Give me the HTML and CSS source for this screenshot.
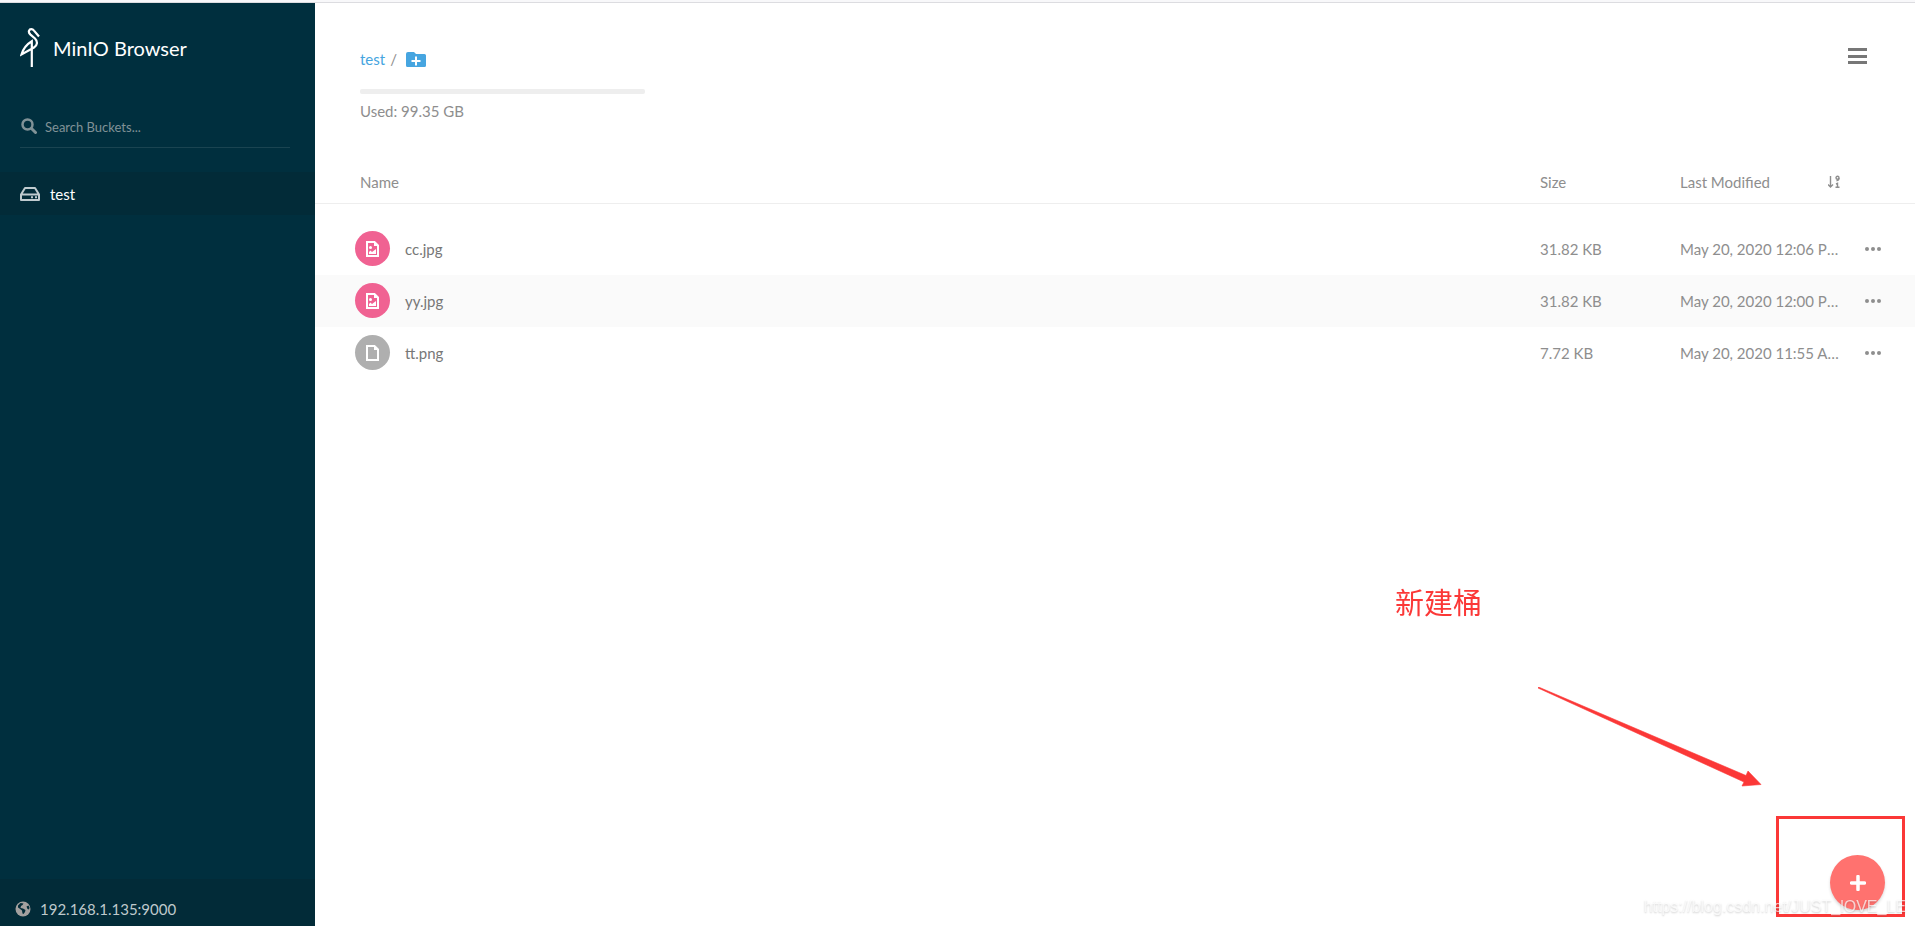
FILE: index.html
```
<!DOCTYPE html>
<html lang="en">
<head>
    <meta charset="UTF-8">
    <meta name="viewport" content="width=device-width, initial-scale=1.0">
    <title>MinIO Browser</title>
    <link rel="stylesheet" href="styles.css">
</head>
<body>
    <div class="page">
        <aside class="sidebar">
            <div class="brand">
                <svg class="logo" viewBox="0 0 20 40" width="20" height="40">
                    <path d="M19 8.500L14 2.600C12.500.700 9.800.700 9 2.800C8.500 4.300 9.200 5.400 10.500 6.600L15 10.500C18 13.500 17.400 17.500 14 19.500L1.500 26.500C3 21.500 6.500 16.500 11.800 13.300V39" fill="none" stroke="#fff" stroke-width="2.200"/>
                </svg>
                <h2>MinIO Browser</h2>
            </div>
            <label class="search">
                <svg viewBox="0 0 16 16" width="16" height="16">
                    <circle cx="6.500" cy="6.500" r="5" fill="none" stroke="currentColor" stroke-width="2.500"/>
                    <path d="M10.500 10.500l4 4" stroke="currentColor" stroke-width="3" stroke-linecap="round"/>
                </svg>
                <input type="text" placeholder="Search Buckets..." aria-label="Search Buckets">
            </label>
            <nav class="buckets">
                <a href="#" class="bucket">
                    <svg viewBox="0 0 20 14" width="20" height="14">
                        <path d="M1 7.500L5 1h10l4 6.500V13H1z M1 7.500h18" fill="none" stroke="currentColor" stroke-width="2" stroke-linejoin="round"/>
                        <path d="M11 10.300h2M15 10.300h2" stroke="currentColor" stroke-width="2"/>
                    </svg>
                    test
                </a>
            </nav>
            <footer class="host">
                <svg viewBox="0 0 16 16" width="16" height="16">
                    <circle cx="8" cy="8" r="7.500" fill="#a3a09f"/>
                    <path d="M3 4.500l2.500-2.500 3 .500-1 1.500L6 5l-.500 2 2.500.500 2.500 1.500-.500 2-1.500 2-1-.500-.500-3L4.500 7.500 3 6.500zM11.500 5.500l2-1 1 2-.500 2-1.500-.500z" fill="#022b38"/>
                </svg>
                <a href="#">192.168.1.135:9000</a>
            </footer>
        </aside>

        <main class="content">
            <header class="header">
                <div>
                    <div class="path">
                        <a href="#">test</a>
                        <span>/</span>
                        <button class="icon-btn" aria-label="New folder">
                            <svg viewBox="0 0 20 15" width="20" height="15">
                                <path d="M2 0h6l2 2h8.500A1.500 1.500 0 0 1 20 3.500v10a1.500 1.500 0 0 1-1.500 1.500h-17A1.500 1.500 0 0 1 0 13.500V2A2 2 0 0 1 2 0z" fill="#46a5e0"/>
                                <path d="M10 4.500v9M5.500 9h9" stroke="#fff" stroke-width="2"/>
                            </svg>
                        </button>
                    </div>
                    <div class="usage-bar"></div>
                    <div class="usage-text">Used: 99.35 GB</div>
                </div>
                <button class="icon-btn menu" aria-label="Menu">
                    <svg viewBox="0 0 19 17" width="19" height="17">
                        <path d="M0 1.500h19M0 8.500h19M0 14.500h19" stroke="#777" stroke-width="3"/>
                    </svg>
                </button>
            </header>

            <table class="files">
                <colgroup>
                    <col>
                    <col class="col-size">
                    <col class="col-date">
                    <col class="col-actions">
                </colgroup>
                <thead>
                    <tr>
                        <th>Name</th>
                        <th>Size</th>
                        <th>
                            <div class="sortable">
                                Last Modified
                                <svg viewBox="0 0 12 14" width="12" height="14">
                                    <path d="M2.500 1v10M0 9.500l2.500 2.500L5 9.500" fill="none" stroke="currentColor" stroke-width="1.400"/>
                                    <circle cx="9.500" cy="2.800" r="1.500" fill="none" stroke="currentColor" stroke-width="1.400"/>
                                    <path d="M11 3c0 1.500-.500 2.500-2.500 2.700M8 9l1.500-.700V12.300M7.500 12.300h4" fill="none" stroke="currentColor" stroke-width="1.400"/>
                                </svg>
                            </div>
                        </th>
                        <th></th>
                    </tr>
                </thead>
                <tbody>
                    <tr>
                        <td>
                            <a href="#" class="file">
                                <span class="type image">
                                    <svg viewBox="0 0 13 16" width="13" height="16">
                                        <path d="M1 1h7.500L12 4.500V15H1z" fill="none" stroke="#fff" stroke-width="2"/>
                                        <path d="M8 0v5h5M3 13v-2l1.500-1.500L6 11l4-3v5z" fill="#fff"/>
                                        <circle cx="4.500" cy="6.500" r="1.500" fill="#fff"/>
                                    </svg>
                                </span>
                                cc.jpg
                            </a>
                        </td>
                        <td>31.82 KB</td>
                        <td class="date">May 20, 2020 12:06 PM</td>
                        <td>
                            <button class="icon-btn more" aria-label="Actions"><i></i><i></i><i></i></button>
                        </td>
                    </tr>
                    <tr>
                        <td>
                            <a href="#" class="file">
                                <span class="type image">
                                    <svg viewBox="0 0 13 16" width="13" height="16">
                                        <path d="M1 1h7.500L12 4.500V15H1z" fill="none" stroke="#fff" stroke-width="2"/>
                                        <path d="M8 0v5h5M3 13v-2l1.500-1.500L6 11l4-3v5z" fill="#fff"/>
                                        <circle cx="4.500" cy="6.500" r="1.500" fill="#fff"/>
                                    </svg>
                                </span>
                                yy.jpg
                            </a>
                        </td>
                        <td>31.82 KB</td>
                        <td class="date">May 20, 2020 12:00 PM</td>
                        <td>
                            <button class="icon-btn more" aria-label="Actions"><i></i><i></i><i></i></button>
                        </td>
                    </tr>
                    <tr>
                        <td>
                            <a href="#" class="file">
                                <span class="type">
                                    <svg viewBox="0 0 13 16" width="13" height="16">
                                        <path d="M1 1h7.500L12 4.500V15H1z" fill="none" stroke="#fff" stroke-width="2"/>
                                        <path d="M8 0v5h5" fill="#fff"/>
                                    </svg>
                                </span>
                                tt.png
                            </a>
                        </td>
                        <td>7.72 KB</td>
                        <td class="date">May 20, 2020 11:55 AM</td>
                        <td>
                            <button class="icon-btn more" aria-label="Actions"><i></i><i></i><i></i></button>
                        </td>
                    </tr>
                </tbody>
            </table>
        </main>
    </div>

    <button class="fab" aria-label="Create">
        <svg viewBox="0 0 16 16" width="16" height="16">
            <path d="M8 1.500v13M1.500 8h13" stroke="#fff" stroke-width="3.500" stroke-linecap="round"/>
        </svg>
    </button>

    <!-- notes drawn over the page -->
    <div class="note">新建桶</div>
    <svg class="arrow" viewBox="0 0 224 102" width="224" height="102">
        <path d="M0 1L.500 0L208 88.500l2-4.500 13 13.500-19 1.500 2-4z" fill="#fb3837" stroke="#fb3837" stroke-width=".6"/>
    </svg>
    <div class="frame"></div>
    <div class="watermark">https://blog.csdn.net/JUST_lOVE_LE</div>
</body>
</html>
```

FILE: styles.css
```
* {
    box-sizing: border-box;
}

body {
    margin: 0;
    font-family: Lato, "Noto Sans CJK SC", sans-serif;
    font-size: 15px;
    line-height: 20px;
    color: #8e8e8e;
    background: #fff;
    border-top: 2px solid #f8f8fa;
}

a {
    color: inherit;
    text-decoration: none;
}

svg {
    display: block;
    flex: none;
}

.page {
    display: flex;
    min-height: calc(100vh - 2px);
    border-top: 1px solid #dcdce0;
}

/* sidebar */
.sidebar {
    flex: none;
    display: flex;
    flex-direction: column;
    width: 315px;
    background: #002f3e;
}

.brand {
    display: flex;
    align-items: center;
    gap: 13px;
    padding: 25px 20px 0;
}

.brand h2 {
    margin: 0;
    font-size: 20px;
    font-weight: 400;
    color: #fff;
}

.search {
    display: flex;
    align-items: center;
    gap: 8px;
    height: 40px;
    margin: 40px 25px 24px 20px;
    padding: 0 1px 3px;
    border-bottom: 1px solid #1a4451;
    color: #809297;
}

.search input {
    flex: 1;
    min-width: 0;
    padding: 2px 0 0;
    border: 0;
    outline: 0;
    background: none;
    font: inherit;
    font-size: 13px;
    color: #fff;
}

.search input::placeholder {
    color: #809297;
}

.bucket {
    display: flex;
    align-items: center;
    gap: 10px;
    height: 43px;
    padding: 0 20px;
    background: #022b38;
    color: #fff;
}

.bucket svg {
    color: #c0cbcf;
}

.host {
    display: flex;
    align-items: center;
    gap: 9px;
    height: 47px;
    margin-top: auto;
    padding: 12px 15px 0;
    background: #022b38;
    color: #bfc9cc;
}

/* main area */
.content {
    flex: 1;
    min-width: 0;
}

.header {
    display: flex;
    justify-content: space-between;
    align-items: flex-start;
    padding: 45px 48px 0 45px;
}

.icon-btn {
    display: flex;
    padding: 0;
    border: 0;
    background: none;
    cursor: pointer;
}

.path {
    display: flex;
    align-items: center;
    gap: 5px;
    padding-top: 1px;
}

.path a {
    color: #46a5e0;
}

.path .icon-btn {
    margin-left: 4px;
}

.usage-bar {
    width: 285px;
    height: 5px;
    margin: 20px 0 7px;
    border-radius: 2px;
    background: #eee;
}

/* file list */
.files {
    width: 100%;
    margin-top: 40px;
    table-layout: fixed;
    border-collapse: collapse;
}

.col-size {
    width: 140px;
}

.col-date {
    width: 160px;
}

.col-actions {
    width: 75px;
}

.files th {
    height: 42px;
    padding: 0;
    border-bottom: 1px solid #eee;
    text-align: left;
    font-weight: 400;
}

.files th:first-child {
    padding-left: 45px;
}

.sortable {
    display: flex;
    align-items: center;
    justify-content: space-between;
}

.files tbody::before {
    content: "";
    display: block;
    height: 19px;
}

.files td {
    height: 52px;
    padding: 0;
}

.files tbody tr:nth-child(even) {
    background: #fafafa;
}

.date {
    overflow: hidden;
    white-space: nowrap;
    text-overflow: ellipsis;
}

.file {
    display: flex;
    align-items: center;
    gap: 15px;
    padding-left: 40px;
    color: #777;
}

.type {
    display: flex;
    align-items: center;
    justify-content: center;
    width: 35px;
    height: 35px;
    border-radius: 50%;
    background: #afafaf;
}

.type.image {
    background: #f06292;
}

.more {
    gap: 2px;
    padding-left: 25px;
}

.more i {
    width: 4px;
    height: 4px;
    border-radius: 50%;
    background: #8e8e8e;
}

.fab {
    position: fixed;
    right: 30px;
    bottom: 16px;
    display: flex;
    align-items: center;
    justify-content: center;
    width: 55px;
    height: 55px;
    padding: 0;
    border: 0;
    border-radius: 50%;
    background: #ff726f;
    box-shadow: 0 2px 3px rgba(0, 0, 0, 0.15);
    cursor: pointer;
}

/* notes */
.note {
    position: fixed;
    right: 433px;
    bottom: 303px;
    font-size: 29px;
    line-height: 40px;
    color: #fb3837;
}

.arrow {
    position: fixed;
    right: 153px;
    bottom: 137px;
}

.frame {
    position: fixed;
    right: 10px;
    bottom: 9px;
    width: 129px;
    height: 101px;
    border: 3px solid #fb3837;
    pointer-events: none;
}

.watermark {
    position: fixed;
    right: 9px;
    bottom: 9px;
    font-family: "Liberation Sans", Arial, sans-serif;
    font-size: 16px;
    color: rgba(255, 255, 255, 0.7);
    text-shadow: 0 1px 2px rgba(0, 0, 0, 0.2);
    pointer-events: none;
}
```
